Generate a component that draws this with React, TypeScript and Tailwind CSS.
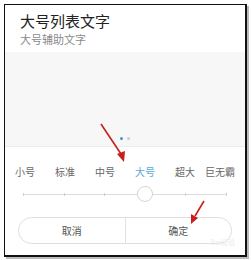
const labels = ["小号", "标准", "中号", "大号", "超大", "巨无霸"];

const App: React.FC = () => {
  return (
    <div className="w-[251px] h-[260px] bg-white pt-[4px] pl-[4px] font-['Noto_Sans_CJK_SC',sans-serif]">
      <div className="relative w-[243px] h-[253px] border-l-[1.5px] border-t-[1.5px] border-r-[2.5px] border-b-[2.5px] border-[#111] shadow-[2px_2px_0_#bbb] flex flex-col">
        {/* header */}
        <div className="h-[47px] bg-white pl-[15px] pt-[6px] flex flex-col">
          <div className="text-[15px] leading-[20px] text-[#222]">大号列表文字</div>
          <div className="text-[11px] leading-[14px] text-[#8a8a8a] mt-[1px]">大号辅助文字</div>
        </div>

        {/* preview area */}
        <div className="h-[95px] bg-[#f7f7f7] border-b border-[#ececec] flex items-end justify-center gap-[4px] pb-[6px]">
          <span className="w-[3px] h-[3px] rounded-full bg-[#4a92c9]" />
          <span className="w-[3px] h-[3px] rounded-full bg-[#b9cfe0]" />
        </div>

        {/* size picker */}
        <div className="flex-1 bg-white flex flex-col">
          <div className="grid grid-cols-6 mt-[19px] text-[10px] leading-[12px]">
            {labels.map((l, i) => (
              <div
                key={l}
                className={
                  "text-center " +
                  (i === 3 ? "text-[#5aa8db]" : "text-[#666]") +
                  (i === 5 ? " pr-[10px]" : "")
                }
              >
                {l}
              </div>
            ))}
          </div>

          <div className="relative mt-[8px] h-[16px] mx-[18px] flex items-center">
            <div className="w-full h-px bg-[#dcdcdc]" />
            <div className="absolute left-0 top-0 w-full h-full flex justify-between items-center">
              {[0, 1, 2, 3, 4, 5].map((t) => (
                <span key={t} className="w-px h-[3px] bg-[#cfcfcf]" />
              ))}
            </div>
            <span className="absolute left-[114px] top-0 w-[16px] h-[16px] rounded-full bg-white border border-[#d4d4d4]" />
          </div>

          <div className="mx-[13px] mt-[15px] h-[27px] rounded-full border border-[#dedede] flex text-[10px] text-[#555]">
            <div className="flex-1 flex items-center justify-center border-r border-[#e2e2e2]">取消</div>
            <div className="flex-1 flex items-center justify-center">确定</div>
          </div>
          <div className="text-right pr-[10px] text-[7px] leading-[8px] text-[#ececec] mt-[-6px]">Bai经验</div>
        </div>

        {/* annotation arrows */}
        <svg className="absolute left-[-6px] top-[-6px] pointer-events-none" width="251" height="260">
          <line x1="102" y1="125" x2="122" y2="155" stroke="#c81e1e" strokeWidth="1.6" />
          <polygon points="125,163 118,155 126,152" fill="#c81e1e" />
          <line x1="205" y1="202" x2="196" y2="217" stroke="#c81e1e" strokeWidth="1.6" />
          <polygon points="192,225 192,215 199,219" fill="#c81e1e" />
        </svg>
      </div>
    </div>
  );
};

export default App;
